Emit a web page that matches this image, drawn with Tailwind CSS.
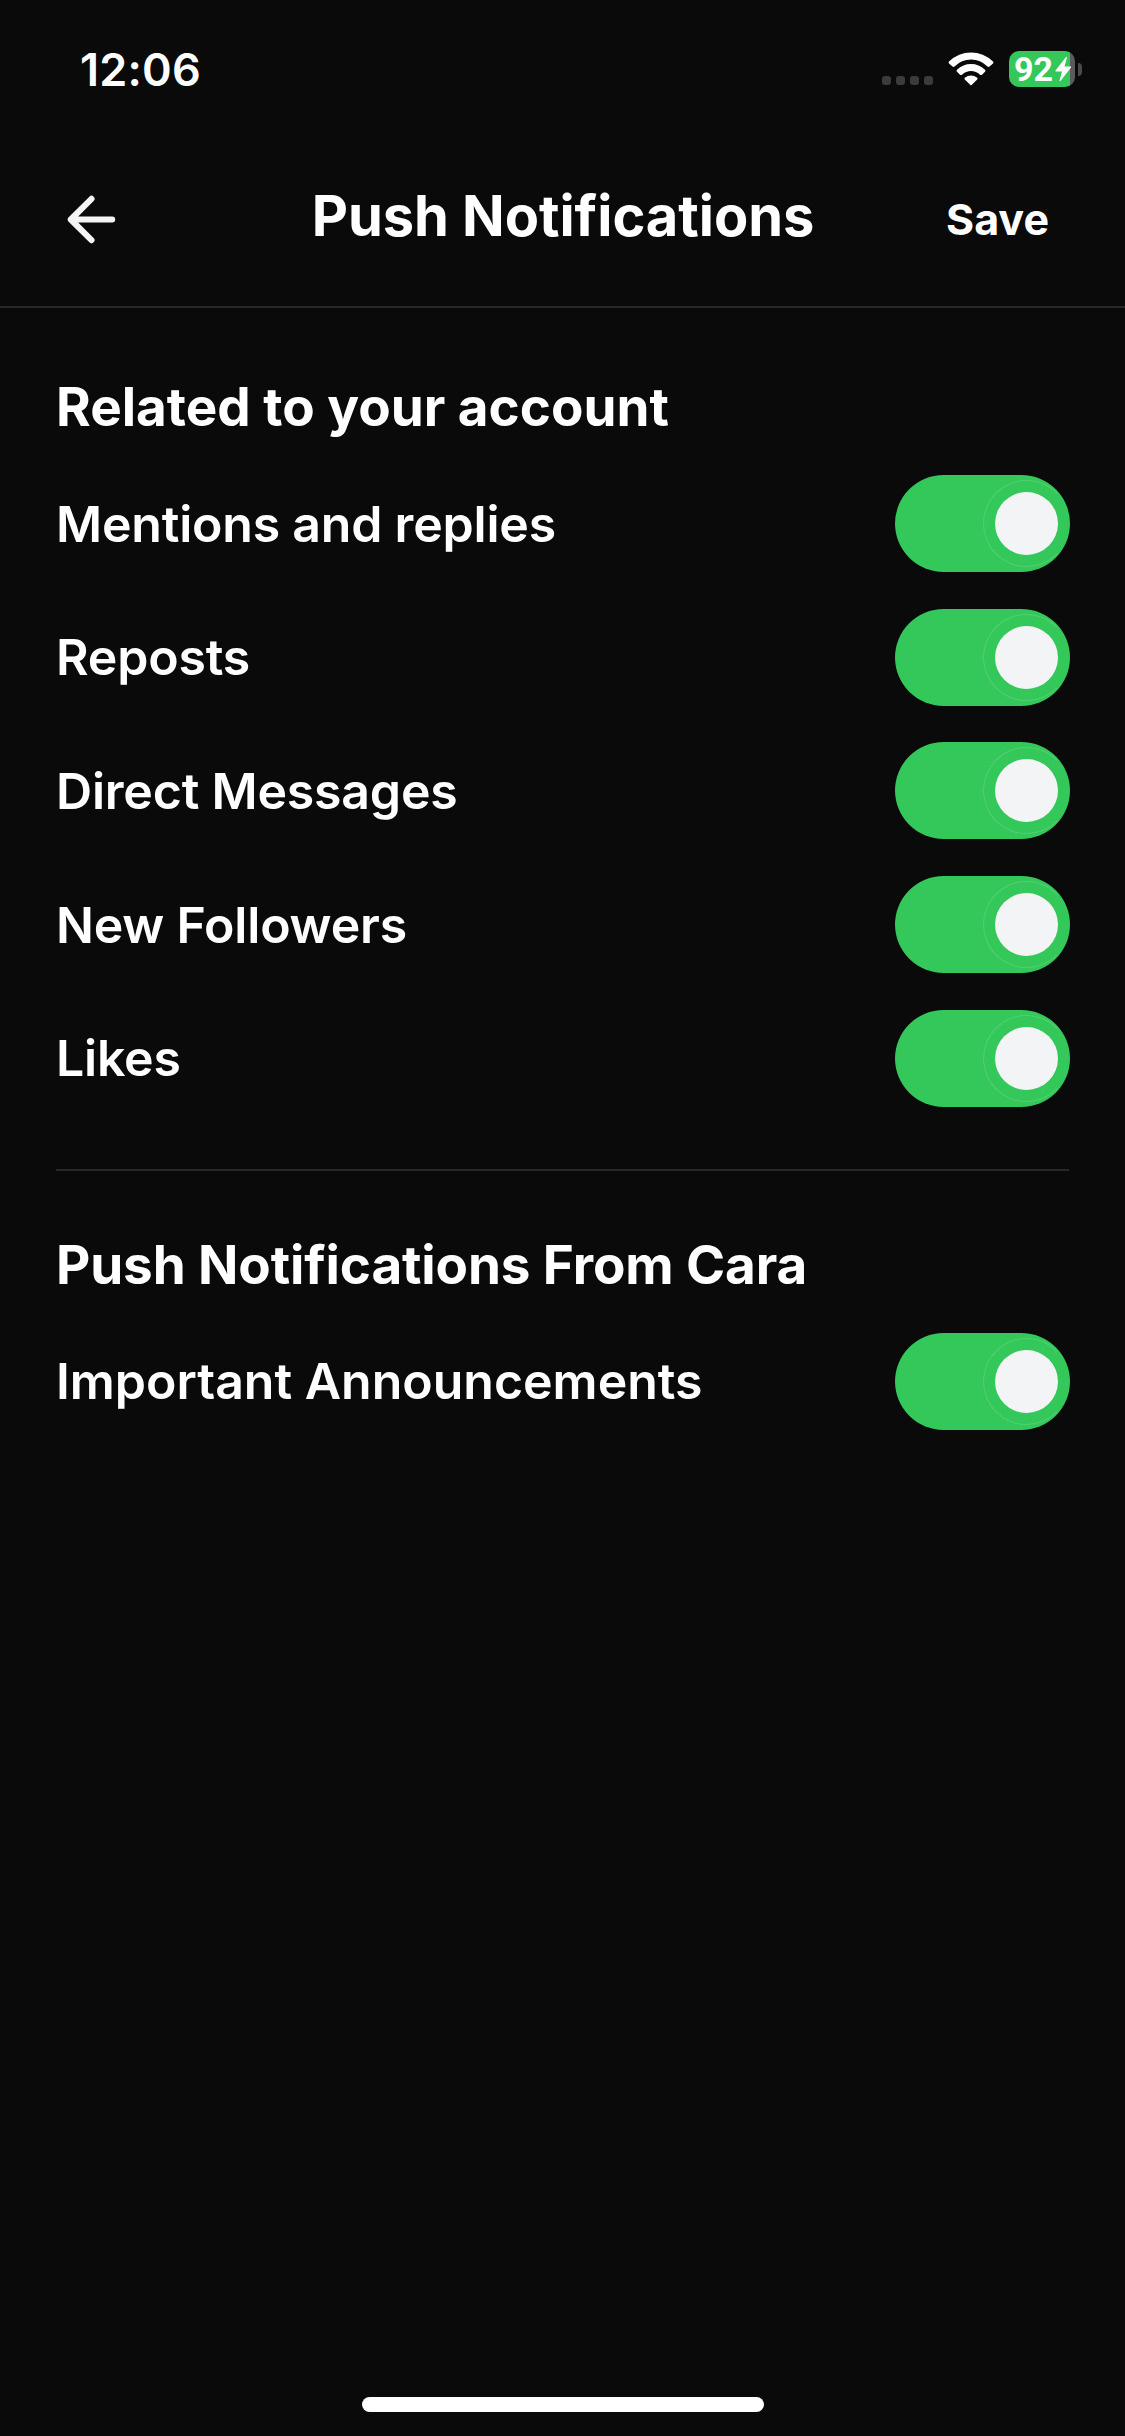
<!DOCTYPE html>
<html lang="en">
<head>
<meta charset="utf-8">
<title>Push Notifications</title>
<script src="https://cdn.jsdelivr.net/npm/@tailwindcss/browser@4"></script>
</head>
<body class="w-[1125px] h-[2436px] bg-[#0a0a0a] text-white font-['Inter',sans-serif] flex flex-col overflow-hidden">
  <div class="h-[138px] shrink-0 flex items-center pl-[80px] pr-[43px] justify-between">
    <span class="text-[45px] font-semibold leading-none tracking-[0.2px]">12:06</span>
    <div class="flex items-center">
      <div class="flex gap-[5px] mt-[23px] mr-[15px]">
        <i class="size-[9px] rounded-[3px] bg-[#3b3b3b]"></i><i class="size-[9px] rounded-[3px] bg-[#3b3b3b]"></i><i class="size-[9px] rounded-[3px] bg-[#3b3b3b]"></i><i class="size-[9px] rounded-[3px] bg-[#3b3b3b]"></i>
      </div>
      <svg class="w-[46px] h-[34px] mr-[15px]" viewBox="0 0 46 34" fill="#fff">
        <path d="M1 9.5Q10.500 0.500 23 0.500T45 9.500Q46 10.500 45 11.500L41.500 14.500Q40.500 15.300 39.500 14.500Q32.500 7.500 23 7.500T6.500 14.500Q5.500 15.300 4.500 14.500L1 11.500Q0 10.500 1 9.500Z"/>
        <path d="M9 17.800Q15 12 23 12T37 17.800Q38 18.700 37 19.700L34 22.700Q33 23.500 32 22.700Q28 19 23 19T14 22.700Q13 23.500 12 22.700L9 19.700Q8 18.700 9 17.800Z"/>
        <path d="M16.800 25.800Q19.700 23.500 23 23.500T29.200 25.800Q30 26.600 29.200 27.400L23.600 33Q23 33.500 22.400 33L16.800 27.400Q16 26.600 16.800 25.800Z"/>
      </svg>
      <div class="relative w-[66px] h-[36px] rounded-[10px] bg-linear-to-r from-[#34c759] from-[61px] to-[#5b5b5b] to-[61px] flex items-center pl-[5px]">
        <span class="font-['Roboto',sans-serif] text-[34px] font-bold leading-[36px]">92</span>
        <svg class="absolute left-[45px] top-[5px] w-[18px] h-[26px]" viewBox="0 0 18 26" fill="#fff"><path d="M12 1L1.500 14.500Q1 15.500 2 15.500H8L5.500 24.500Q5.500 25.500 6.500 25L17 11.500Q17.500 10.500 16.500 10.500H10.500L13 1.500Q13 .500 12 1Z"/></svg>
      </div>
      <i class="w-[4px] h-[13px] ml-[3px] rounded-r-full bg-[#4a4a4a]"></i>
    </div>
  </div>
  <header class="h-[170px] shrink-0 border-b-2 border-[#282828] grid grid-cols-[1fr_auto_1fr] items-center pl-[56px] pr-[76px]">
    <svg class="size-[71px] -mt-[6px]" viewBox="0 0 24 24" fill="none" stroke="#f3f4f6" stroke-width="2.050" stroke-linecap="round" stroke-linejoin="round"><path d="M19 12H5M12 19l-7-7 7-7"/></svg>
    <h1 class="text-[56px] leading-[68px] font-bold -mt-[12px] ml-[21px] tracking-[-0.05px]">Push Notifications</h1>
    <span class="justify-self-end text-[43px] leading-[50px] font-bold -mt-[7px]">Save</span>
  </header>
  <main class="px-[56px] pt-[59px]">
    <section>
      <h2 class="text-[53px] leading-[80px] font-bold mb-[28px]">Related to your account</h2>
      <div id="account" class="text-[50px] font-semibold tracking-[-0.2px] flex flex-col gap-[36.700px]"></div>
    </section>
    <section class="mt-[62px] border-t-2 border-[#282828] pt-[54px]">
      <h2 class="text-[53px] leading-[80px] font-bold mb-[28px] tracking-[-0.12px]">Push Notifications From Cara</h2>
      <div id="cara" class="text-[50px] font-semibold flex flex-col"></div>
    </section>
  </main>
  <div class="mt-auto mb-[24px] self-center w-[402px] h-[15px] rounded-full bg-white shrink-0"></div>
  <template id="row">
    <div class="h-[97px] flex items-center justify-between -mr-px">
      <span class="pt-px"></span>
      <div class="w-[175px] h-[97px] rounded-full bg-[#34c759] flex items-center justify-end">
        <div class="size-[87px] rounded-full border border-[#52cf70] border-r-transparent flex items-center justify-center">
          <div class="size-[63px] rounded-full bg-[#f3f4f6]"></div>
        </div>
      </div>
    </div>
  </template>
  <script>
    const fill = (id, labels) => labels.forEach(label => {
      const row = document.getElementById('row').content.cloneNode(true);
      row.querySelector('span').textContent = label;
      document.getElementById(id).append(row);
    });
    fill('account', ['Mentions and replies', 'Reposts', 'Direct Messages', 'New Followers', 'Likes']);
    fill('cara', ['Important Announcements']);
  </script>
</body>
</html>
